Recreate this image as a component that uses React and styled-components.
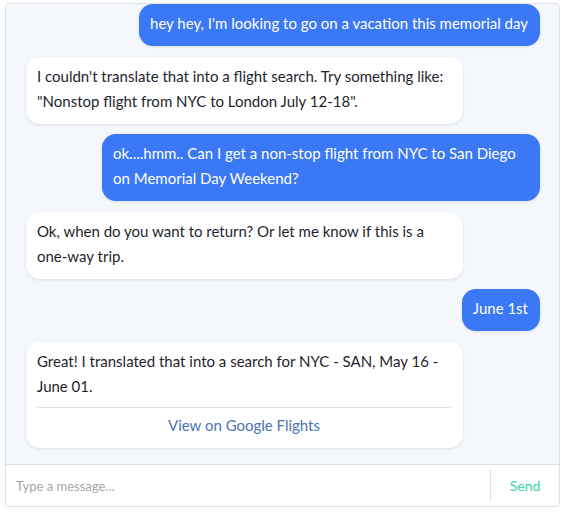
import React from 'react';
import styled, { createGlobalStyle } from 'styled-components';

const GlobalStyle = createGlobalStyle`
  html, body {
    margin: 0;
    padding: 0;
    background: #ffffff;
  }
  body {
    font-family: Lato, "Open Sans", sans-serif;
  }
`;

const ChatWindow = styled.div`
  box-sizing: border-box;
  margin: 3px 0 0 5px;
  width: 555px;
  height: 504px;
  border: 1px solid #dde1e6;
  border-radius: 4px;
  background: #f4f7fb;
  display: flex;
  flex-direction: column;
  overflow: hidden;
`;

const MessageList = styled.div`
  flex: 1;
  display: flex;
  flex-direction: column;
  justify-content: flex-end;
  gap: 10.6px;
  padding: 0 19px 16px 20px;
  overflow: hidden;
`;

const Bubble = styled.div`
  box-sizing: border-box;
  max-width: 438px;
  padding: 7px 12px 10px 11px;
  border-radius: 14px;
  font-size: 15px;
  line-height: 25px;
  align-self: ${(p) => (p.$mine ? 'flex-end' : 'flex-start')};
  width: ${(p) => (p.$mine ? 'auto' : '437px')};
  background: ${(p) => (p.$mine ? '#3b78f5' : '#ffffff')};
  color: ${(p) => (p.$mine ? '#ffffff' : '#1f1f2e')};
  box-shadow: 0 1px 3px rgba(40, 60, 90, 0.12);
`;

const Divider = styled.div`
  height: 1px;
  background: #e1e4e8;
  margin: 8px 0 5px;
`;

const FlightLink = styled.a`
  display: block;
  text-align: center;
  color: #4d74b3;
  text-decoration: none;
  cursor: pointer;
`;

const Composer = styled.div`
  display: flex;
  align-items: stretch;
  height: 41px;
  background: #ffffff;
  border-top: 1px solid #dde1e6;
`;

const MessageInput = styled.input`
  flex: 1;
  border: none;
  outline: none;
  padding: 0 10px;
  font-family: Lato, "Open Sans", sans-serif;
  font-size: 13px;
  color: #333;
  background: transparent;
  &::placeholder {
    color: #a3a8ae;
  }
`;

const SendButton = styled.button`
  width: 69px;
  margin: 4px 0;
  border: none;
  border-left: 1px solid #dde1e6;
  background: transparent;
  font-family: Lato, "Open Sans", sans-serif;
  font-size: 14px;
  color: #2fd8a8;
  cursor: pointer;
`;

const messages = [
  { mine: true, text: "hey hey, I'm looking to go on a vacation this memorial day" },
  {
    mine: false,
    text: 'I couldn\'t translate that into a flight search. Try something like: "Nonstop flight from NYC to London July 12-18".',
  },
  {
    mine: true,
    text: 'ok....hmm.. Can I get a non-stop flight from NYC to San Diego on Memorial Day Weekend?',
  },
  {
    mine: false,
    text: 'Ok, when do you want to return? Or let me know if this is a one-way trip.',
  },
  { mine: true, text: 'June 1st' },
  {
    mine: false,
    text: 'Great! I translated that into a search for NYC - SAN, May 16 - June 01.',
    link: 'View on Google Flights',
  },
];

export default function App() {
  return (
    <>
      <GlobalStyle />
      <ChatWindow>
        <MessageList>
          {messages.map((m, i) => (
            <Bubble key={i} $mine={m.mine}>
              {m.text}
              {m.link && (
                <>
                  <Divider />
                  <FlightLink>{m.link}</FlightLink>
                </>
              )}
            </Bubble>
          ))}
        </MessageList>
        <Composer>
          <MessageInput placeholder="Type a message..." />
          <SendButton>Send</SendButton>
        </Composer>
      </ChatWindow>
    </>
  );
}
